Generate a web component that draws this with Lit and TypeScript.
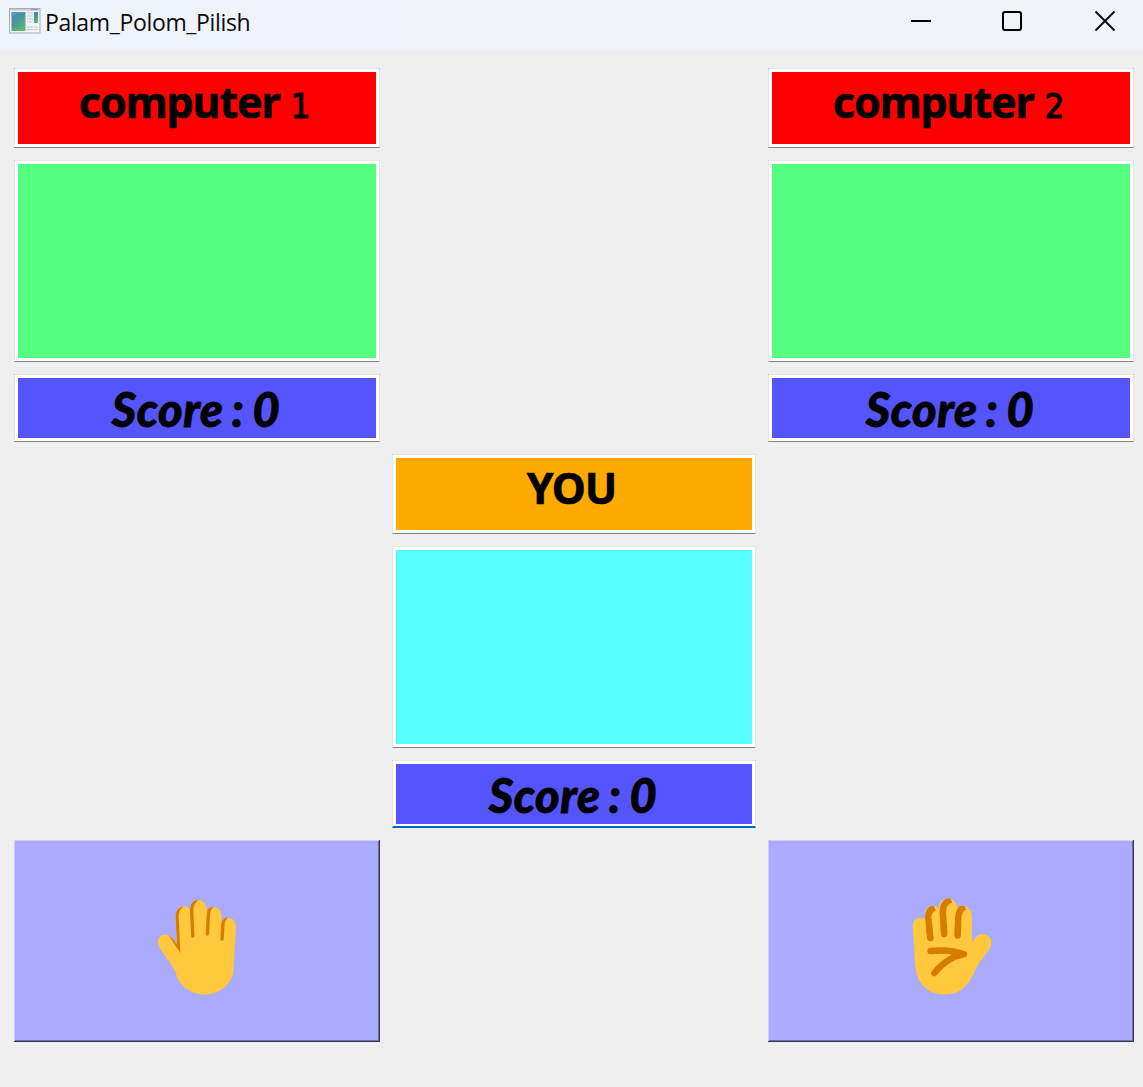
import { LitElement, html, css, svg } from "lit";
import { customElement, property } from "lit/decorators.js";
import { classMap } from "lit/directives/class-map.js";

@customElement("title-bar")
class TitleBar extends LitElement {
  @property() label = "";

  static styles = css`
    :host {
      display: flex;
      align-items: flex-start;
      height: 50px;
      background: linear-gradient(90deg, #eff3fb 0, #f0f3fa 300px, #f1f3f8 520px);
      color: #0a0a0a;
      box-sizing: border-box;
      padding-left: 9px;
    }
    .icon { margin-top: 8px; width: 32px; height: 26px; flex: none; }
    .label {
      flex: 1;
      margin: 6px 0 0 4px;
      font: 23px/32px "Open Sans", "Noto Sans", sans-serif;
      letter-spacing: -0.35px;
      white-space: nowrap;
    }
    .controls { display: flex; }
    .control { width: 92px; height: 42px; flex: none; }
    .control:last-child { width: 84px; }
  `;

  render() {
    return html`
      <svg class="icon" viewBox="0 0 32 26">
        <defs>
          <linearGradient id="pane" x1="0" y1="0" x2="0.6" y2="1">
            <stop offset="0" stop-color="#4d87b4" />
            <stop offset="0.5" stop-color="#4a949b" />
            <stop offset="1" stop-color="#5fb877" />
          </linearGradient>
        </defs>
        <rect x="0.5" y="0.5" width="30.500" height="24.500" fill="#f3f3f4" stroke="#a9adb3" />
        <path d="M1 1.800H30.500" stroke="#c5cbd3" stroke-width="1.600" />
        <path d="M22 1.500h7" stroke="#8f979f" stroke-width="1" />
        <rect x="2.500" y="4" width="14" height="19" fill="url(#pane)" />
        <path d="M2.500 8Q10 5 16.500 5V4h-14z" fill="#6a9dc6" opacity="0.6" />
        <path d="M18 5h6M18 8h6M18 11h6M18 14h6M18 19h6M18 21.500h6" stroke="#c3c5c8" stroke-width="1" />
        <rect x="25" y="4" width="4" height="11" fill="url(#pane)" />
        <path d="M25 19h4M25 21.500h4" stroke="#c9cbce" stroke-width="1" />
      </svg>
      <span class="label">${this.label}</span>
      <div class="controls">
        <svg class="control" viewBox="0 0 92 42"><path d="M36 21H56" stroke="#000" stroke-width="2" /></svg>
        <svg class="control" viewBox="0 0 92 42"><rect x="36" y="12" width="18" height="18" rx="2" fill="none" stroke="#000" stroke-width="2" /></svg>
        <svg class="control" viewBox="0 0 84 42"><path d="M36.500 11.500L55.500 30.500M55.500 11.500L36.500 30.500" stroke="#111" stroke-width="2" /></svg>
      </div>
    `;
  }
}

@customElement("field-box")
class FieldBox extends LitElement {
  @property() tone = "red";
  @property() kind = "name";
  @property() text = "";
  @property() digit = "";
  @property({ type: Boolean }) focused = false;

  static styles = css`
    :host { display: block; }
    .corners { height: 100%; }
    .frame {
      box-sizing: border-box;
      height: 100%;
      border: 1px solid #e6e6e6;
      border-bottom-color: #868686;
      border-radius: 1.3px;
      padding: 3px;
      background: #fff;
    }
    .frame.focused {
      border-bottom: 2px solid #0067c0;
      padding-bottom: 2px;
      border-radius: 1.3px 1.3px 0 0;
    }
    .fill {
      box-sizing: border-box;
      height: 100%;
      display: flex;
      justify-content: center;
      align-items: baseline;
      color: #000;
      white-space: pre;
    }
    .red { background: #ff0000; }
    .green { background: #55ff7f; }
    .blue { background: #5555ff; }
    .orange { background: #ffaa00; }
    .cyan { background: #55ffff; }
    .name {
      font: 700 43px/60px "Noto Sans", "Open Sans", sans-serif;
      padding-right: 5px;
    }
    .name .text { letter-spacing: -1.1px; -webkit-text-stroke: 0.6px #000; }
    .digit {
      font-family: "DejaVu Sans Condensed", "DejaVu Sans", sans-serif;
      font-stretch: condensed;
      font-size: 34px;
      font-weight: 400;
      margin-left: 11px;
      -webkit-text-stroke: 1.2px #000;
    }
    .score {
      font: italic 900 47px/63px Lato, sans-serif;
      letter-spacing: 0.5px;
      word-spacing: -2.5px;
      padding-right: 2px;
      -webkit-text-stroke: 0.8px #000;
    }
  `;

  render() {
    const fill = { fill: true, [this.tone]: true, [this.kind]: true };
    return html`
      <div class=${classMap({ corners: true, [this.tone]: true })}>
        <div class=${classMap({ frame: true, focused: this.focused })}>
          <div class=${classMap(fill)}>
            ${this.text ? html`<span class="text">${this.text}</span>` : null}
            ${this.digit ? html`<span class="digit">${this.digit}</span>` : null}
          </div>
        </div>
      </div>
    `;
  }
}

const backShape =
  "M18 58C17 50 27 46 32 53L37 59L35.5 32C35 20 49 18 50 26V24C50 12 66 12 66.5 24V27C68 20 81 20 81.5 30V37C84 30 95 31 96 41L93.5 84C93 99 80 109.5 64 109.5C51 109.5 39 101 35.5 87C31 76 19 66 18 58Z";

const backHand = svg`
  <clipPath id="back"><path d=${backShape} /></clipPath>
  <path d=${backShape} fill="#ffc83d" />
  <g fill="none" stroke="#d67d00" stroke-width="3.4" stroke-linecap="round" clip-path="url(#back)">
    <path d="M30 49L38.4 62L37 33C36.800 27 38 23.500 41 21.500" />
    <path d="M52.800 51L51.700 26C51.700 20 53 17.500 56 15" />
    <path d="M67.400 49L68.300 31C68.500 26 69.500 23 72 21.500" />
    <path d="M82 54L82.800 41C83 36.500 84.200 33.500 86.500 32" />
  </g>
`;

const palmShape =
  "M22.7 42C22.5 33 30 31 35 33.500C34 24 38 21 43 21C46 20.500 48 22.500 49 24C49 15 55 13 60 13.500C65 15 67 19 67 23C70 19 81 20 82 31V57L86 52C92 45 104 51 101 60C100 65 94 71 89 78C82 91 77 109.5 55 109.5C37 109.5 26 98 25 78Z";

const palmHand = svg`
  <clipPath id="palm"><path d=${palmShape} /></clipPath>
  <path d=${palmShape} fill="#ffc83d" />
  <g fill="none" stroke="#d67d00" stroke-width="6.4" stroke-linecap="round" clip-path="url(#palm)">
    <path d="M40.500 53.500L38.300 33C38 28 39.500 24.500 44.500 22.500" stroke-linecap="butt" />
    <path d="M40.300 53L39.500 46M54.200 49L53.800 40M67.700 50.500L68 42" />
    <path d="M54.200 49L52.800 28C52.600 21 55 16.500 61 14.500" stroke-linecap="butt" />
    <path d="M67.700 50.500L68.200 33C68.400 27 70 23.500 75 21.500" stroke-linecap="butt" />
    <path d="M40.500 66C52 65 64 65.500 74 69.300C61 71 50 81 44.300 88" stroke-linejoin="round" />
  </g>
`;

@customElement("hand-button")
class HandButton extends LitElement {
  @property() side = "back";

  static styles = css`
    :host { display: block; }
    .button {
      box-sizing: border-box;
      display: flex;
      width: 100%;
      height: 100%;
      padding: 45px 0 0 126px;
      margin: 0;
      background: #aaaaff;
      border: 0;
      box-shadow: inset -1px -1px #373754, inset 1px 1px #ccccff, inset -2px -2px #6e6ea6;
    }
    .palm { padding-left: 122px; }
    .hand { width: 120px; height: 120px; flex: none; }
  `;

  render() {
    const palm = this.side === "palm";
    return html`
      <button class=${classMap({ button: true, palm })}>
        <svg class="hand" viewBox="0 0 120 120">${palm ? palmHand : backHand}</svg>
      </button>
    `;
  }
}

@customElement("app-root")
class AppRoot extends LitElement {
  static styles = css`
    :host { display: block; width: 1143px; height: 1087px; background: #efefef; overflow: hidden; }
    .board {
      display: grid;
      grid-template-columns: 366px 364px 366px;
      grid-template-rows: 80px 202px 68px 80px 202px 68px 202px;
      gap: 12px;
      padding: 18px 9px 45px 14px;
    }
    .left { grid-column: 1; }
    .middle { grid-column: 2; }
    .right { grid-column: 3; }
    .r1 { grid-row: 1; }
    .r2 { grid-row: 2; }
    .r3 { grid-row: 3; }
    .r4 { grid-row: 4; }
    .r5 { grid-row: 5; }
    .r6 { grid-row: 6; }
    .r7 { grid-row: 7; }
  `;

  render() {
    return html`
      <title-bar label="Palam_Polom_Pilish"></title-bar>
      <main class="board">
        <field-box class="left r1" text="computer" digit="1"></field-box>
        <field-box class="right r1" text="computer" digit="2"></field-box>
        <field-box class="left r2" tone="green"></field-box>
        <field-box class="right r2" tone="green"></field-box>
        <field-box class="left r3" tone="blue" kind="score" text="Score : 0"></field-box>
        <field-box class="right r3" tone="blue" kind="score" text="Score : 0"></field-box>
        <field-box class="middle r4" tone="orange" text="YOU"></field-box>
        <field-box class="middle r5" tone="cyan"></field-box>
        <field-box class="middle r6" tone="blue" kind="score" text="Score : 0" focused></field-box>
        <hand-button class="left r7" side="back"></hand-button>
        <hand-button class="right r7" side="palm"></hand-button>
      </main>
    `;
  }
}
